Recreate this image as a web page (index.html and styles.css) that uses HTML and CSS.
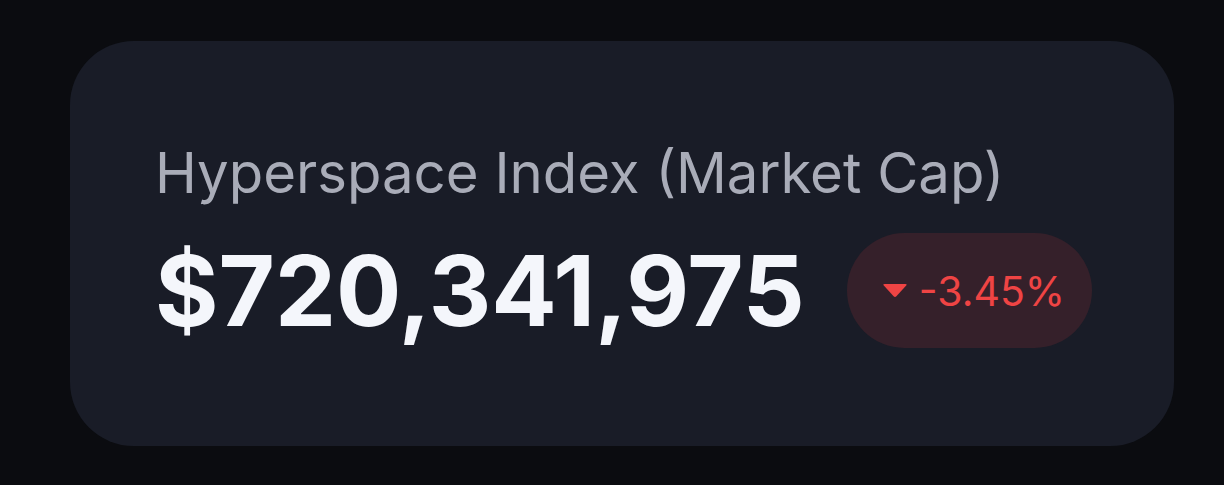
FILE: index.html
```html
<!DOCTYPE html>
<html lang="en">
<head>
  <meta charset="UTF-8" />
  <meta name="viewport" content="width=device-width, initial-scale=1.0"/>
  <title>Hyperspace Index</title>
  <link rel="stylesheet" href="styles.css">
</head>
<body>
  <div class="index-card">
    <div class="index-label">Hyperspace Index (Market Cap)</div>
    <div class="index-row">
      <div class="index-value">$720,341,975</div>
      <div class="change-badge down">
        <svg class="change-arrow" viewBox="0 0 26 15" width="26" height="15">
          <path d="M2.5 1 H23.5 Q25.5 1 24.2 2.6 L14.4 13.2 Q13 14.6 11.6 13.2 L1.8 2.6 Q0.5 1 2.5 1 Z" fill="currentColor"/>
        </svg>
        <span>-3.45%</span>
      </div>
    </div>
  </div>
</body>
</html>
```

FILE: styles.css
```css
body {
  margin: 0;
  font-family: Inter, "Noto Sans", sans-serif;
  background: #0b0c10;
  min-height: 100vh;
  padding: 41px 50px 39px 70px;
  box-sizing: border-box;
}

.index-card {
  background: #191c27;
  border-radius: 64px;
  width: 1104px;
  height: 405px;
  box-sizing: border-box;
  padding: 114px 85px 0 85px;
  display: flex;
  flex-direction: column;
}

.index-label {
  color: #a9acb8;
  font-size: 56.3px;
  line-height: 1;
  margin-top: -10px;
}

.index-row {
  display: flex;
  align-items: center;
  gap: 42px;
  margin-top: 32px;
}

.index-value {
  color: #f4f6fb;
  font-size: 97px;
  font-weight: 700;
  line-height: 1;
}

.change-badge {
  display: flex;
  align-items: center;
  gap: 11px;
  height: 115px;
  padding: 0 27px 0 35px;
  border-radius: 58px;
  font-size: 41px;
  box-sizing: border-box;
}

.change-badge.down {
  background: #35202a;
  color: #ef4444;
}

.change-arrow {
  display: block;
}
```
